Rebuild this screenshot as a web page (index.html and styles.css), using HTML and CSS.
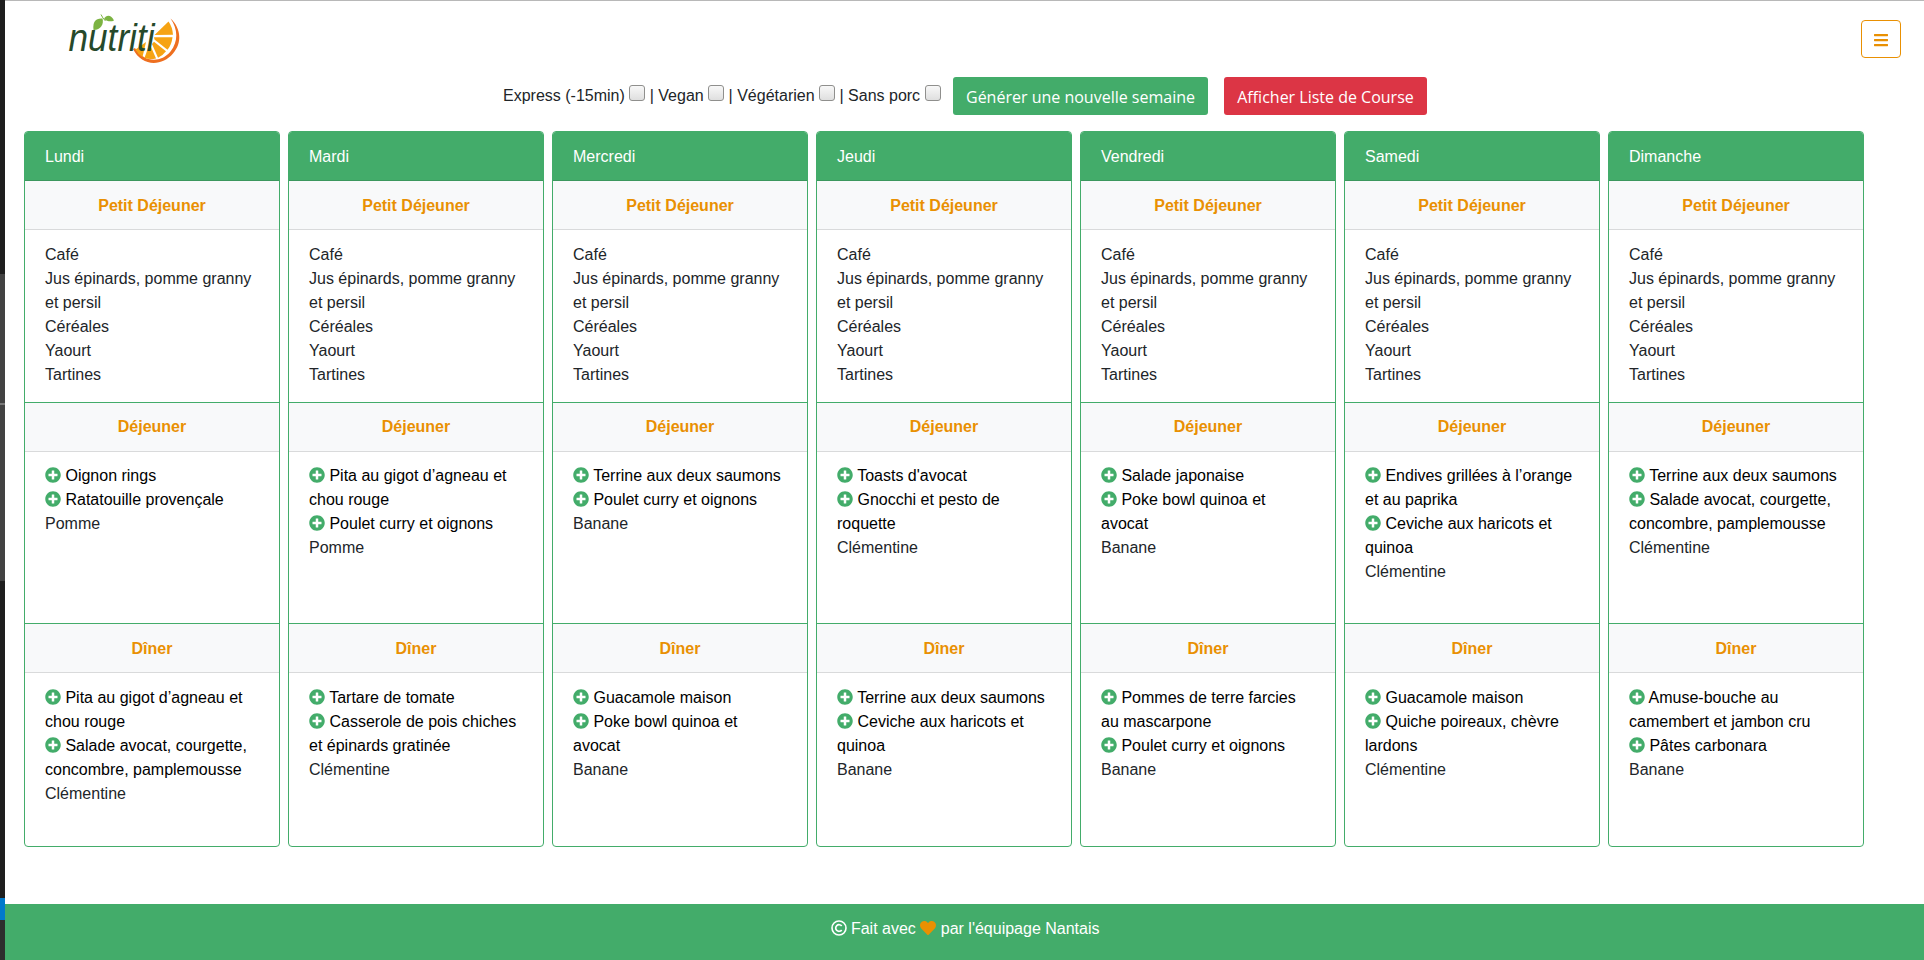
FILE: index.html
```html
<!DOCTYPE html>
<html lang="fr">
<head>
<meta charset="utf-8">
<title>Nutriti</title>
<link rel="stylesheet" href="styles.css">
</head>
<body>
<svg class="sprite" width="0" height="0" aria-hidden="true">
  <symbol id="plus" viewBox="0 0 512 512"><path d="M256 8C119 8 8 119 8 256s111 248 248 248 248-111 248-248S393 8 256 8zm144 276c0 6.600-5.400 12-12 12h-92v92c0 6.600-5.400 12-12 12h-56c-6.600 0-12-5.400-12-12v-92h-92c-6.600 0-12-5.400-12-12v-56c0-6.600 5.400-12 12-12h92v-92c0-6.600 5.400-12 12-12h56c6.600 0 12 5.400 12 12v92h92c6.600 0 12 5.400 12 12v56z"/></symbol>
</svg>
<aside class="dock"><i class="dock-top"></i><i class="dock-thumb"><b></b></i><i class="dock-low"></i><i class="dock-blue"></i><i class="dock-end"></i></aside>
<div class="page">
  <header class="topbar">
    <svg class="logo" width="130" height="65" viewBox="0 0 130 65" role="img" aria-label="nutriti">
      <path fill="#ee6f20" d="M110.500 13.500C121 23 122.500 38 113 48.500C102 61.500 82 62 73 44L75 43C84 58 101 58 110.500 46.500C118.500 36.500 118 24 110.500 13.500Z"/>
      <g fill="#f6a313">
        <path d="M108.500 16.500Q112.500 22 113 29.800L94.500 30Z"/>
        <path d="M94 32.200H112.500Q111.500 40 107.500 44.800L94.500 34.500Z"/>
        <path d="M94 36.800L106 46.300Q103 50.500 98 52.700L92 39Z"/>
        <path d="M89.500 38.500L96 53.400Q90 55 84.500 53Z"/>
        <path d="M86 37L82.500 52Q78 49.500 75.500 44.500Z"/>
      </g>
      <g fill="#7cb342">
        <path d="M33.500 25C32.500 16 36 13 42.500 13.500C44 19 41 25 33.500 25Z"/>
        <path d="M44 14C46.500 9 51.500 10 54 15.500C51 17 47 16.500 44 14Z"/>
      </g>
      <path d="M41 9.500Q42.500 13 45.500 16" fill="none" stroke="#7cb342" stroke-width="1"/>
      <text class="logo-text" x="0" y="0" transform="translate(8.500 45.500) scale(1 1.650)" textLength="86" lengthAdjust="spacingAndGlyphs">nutriti</text>
    </svg>
    <button class="menu" aria-label="Menu"><svg width="14" height="16" viewBox="0 0 448 512"><path fill="currentColor" d="M16 132h416c8.800 0 16-7.200 16-16V76c0-8.800-7.200-16-16-16H16C7.200 60 0 67.200 0 76v40c0 8.800 7.200 16 16 16zm0 160h416c8.800 0 16-7.200 16-16v-40c0-8.800-7.200-16-16-16H16c-8.800 0-16 7.200-16 16v40c0 8.800 7.200 16 16 16zm0 160h416c8.800 0 16-7.200 16-16v-40c0-8.800-7.200-16-16-16H16c-8.800 0-16 7.200-16 16v40c0 8.800 7.200 16 16 16z"/></svg></button>
  </header>
  <form class="filters">
    <div class="checks">Express (-15min) <input type="checkbox"> | Vegan <input type="checkbox"> | Végétarien <input type="checkbox"> | Sans porc <input type="checkbox"></div>
    <button type="button" class="btn green">Générer une nouvelle semaine</button>
    <button type="button" class="btn red">Afficher Liste de Course</button>
  </form>
  <main class="week">
    <section class="day">
      <h2>Lundi</h2>
      <h3>Petit Déjeuner</h3>
      <ul class="morning"><li>Café</li><li>Jus épinards, pomme granny et persil</li><li>Céréales</li><li>Yaourt</li><li>Tartines</li></ul>
      <h3 class="mid">Déjeuner</h3>
      <ul class="noon"><li><a><svg><use href="#plus"/></svg> Oignon rings</a></li><li><a><svg><use href="#plus"/></svg> Ratatouille provençale</a></li><li>Pomme</li></ul>
      <h3>Dîner</h3>
      <ul class="evening"><li><a><svg><use href="#plus"/></svg> Pita au gigot d’agneau et chou rouge</a></li><li><a><svg><use href="#plus"/></svg> Salade avocat, courgette, concombre, pamplemousse</a></li><li>Clémentine</li></ul>
    </section>
    <section class="day">
      <h2>Mardi</h2>
      <h3>Petit Déjeuner</h3>
      <ul class="morning"><li>Café</li><li>Jus épinards, pomme granny et persil</li><li>Céréales</li><li>Yaourt</li><li>Tartines</li></ul>
      <h3 class="mid">Déjeuner</h3>
      <ul class="noon"><li><a><svg><use href="#plus"/></svg> Pita au gigot d’agneau et chou rouge</a></li><li><a><svg><use href="#plus"/></svg> Poulet curry et oignons</a></li><li>Pomme</li></ul>
      <h3>Dîner</h3>
      <ul class="evening"><li><a><svg><use href="#plus"/></svg> Tartare de tomate</a></li><li><a><svg><use href="#plus"/></svg> Casserole de pois chiches et épinards gratinée</a></li><li>Clémentine</li></ul>
    </section>
    <section class="day">
      <h2>Mercredi</h2>
      <h3>Petit Déjeuner</h3>
      <ul class="morning"><li>Café</li><li>Jus épinards, pomme granny et persil</li><li>Céréales</li><li>Yaourt</li><li>Tartines</li></ul>
      <h3 class="mid">Déjeuner</h3>
      <ul class="noon"><li><a><svg><use href="#plus"/></svg> Terrine aux deux saumons</a></li><li><a><svg><use href="#plus"/></svg> Poulet curry et oignons</a></li><li>Banane</li></ul>
      <h3>Dîner</h3>
      <ul class="evening"><li><a><svg><use href="#plus"/></svg> Guacamole maison</a></li><li><a><svg><use href="#plus"/></svg> Poke bowl quinoa et avocat</a></li><li>Banane</li></ul>
    </section>
    <section class="day">
      <h2>Jeudi</h2>
      <h3>Petit Déjeuner</h3>
      <ul class="morning"><li>Café</li><li>Jus épinards, pomme granny et persil</li><li>Céréales</li><li>Yaourt</li><li>Tartines</li></ul>
      <h3 class="mid">Déjeuner</h3>
      <ul class="noon"><li><a><svg><use href="#plus"/></svg> Toasts d'avocat</a></li><li><a><svg><use href="#plus"/></svg> Gnocchi et pesto de roquette</a></li><li>Clémentine</li></ul>
      <h3>Dîner</h3>
      <ul class="evening"><li><a><svg><use href="#plus"/></svg> Terrine aux deux saumons</a></li><li><a><svg><use href="#plus"/></svg> Ceviche aux haricots et quinoa</a></li><li>Banane</li></ul>
    </section>
    <section class="day">
      <h2>Vendredi</h2>
      <h3>Petit Déjeuner</h3>
      <ul class="morning"><li>Café</li><li>Jus épinards, pomme granny et persil</li><li>Céréales</li><li>Yaourt</li><li>Tartines</li></ul>
      <h3 class="mid">Déjeuner</h3>
      <ul class="noon"><li><a><svg><use href="#plus"/></svg> Salade japonaise</a></li><li><a><svg><use href="#plus"/></svg> Poke bowl quinoa et avocat</a></li><li>Banane</li></ul>
      <h3>Dîner</h3>
      <ul class="evening"><li><a><svg><use href="#plus"/></svg> Pommes de terre farcies au mascarpone</a></li><li><a><svg><use href="#plus"/></svg> Poulet curry et oignons</a></li><li>Banane</li></ul>
    </section>
    <section class="day">
      <h2>Samedi</h2>
      <h3>Petit Déjeuner</h3>
      <ul class="morning"><li>Café</li><li>Jus épinards, pomme granny et persil</li><li>Céréales</li><li>Yaourt</li><li>Tartines</li></ul>
      <h3 class="mid">Déjeuner</h3>
      <ul class="noon"><li><a><svg><use href="#plus"/></svg> Endives grillées à l’orange et au paprika</a></li><li><a><svg><use href="#plus"/></svg> Ceviche aux haricots et quinoa</a></li><li>Clémentine</li></ul>
      <h3>Dîner</h3>
      <ul class="evening"><li><a><svg><use href="#plus"/></svg> Guacamole maison</a></li><li><a><svg><use href="#plus"/></svg> Quiche poireaux, chèvre lardons</a></li><li>Clémentine</li></ul>
    </section>
    <section class="day">
      <h2>Dimanche</h2>
      <h3>Petit Déjeuner</h3>
      <ul class="morning"><li>Café</li><li>Jus épinards, pomme granny et persil</li><li>Céréales</li><li>Yaourt</li><li>Tartines</li></ul>
      <h3 class="mid">Déjeuner</h3>
      <ul class="noon"><li><a><svg><use href="#plus"/></svg> Terrine aux deux saumons</a></li><li><a><svg><use href="#plus"/></svg> Salade avocat, courgette, concombre, pamplemousse</a></li><li>Clémentine</li></ul>
      <h3>Dîner</h3>
      <ul class="evening"><li><a><svg><use href="#plus"/></svg> Amuse-bouche au camembert et jambon cru</a></li><li><a><svg><use href="#plus"/></svg> Pâtes carbonara</a></li><li>Banane</li></ul>
    </section>
  </main>
  <footer class="footer"><svg viewBox="0 0 16 16"><circle cx="8" cy="8" r="7" fill="none" stroke="#fff" stroke-width="1.600"/><path d="M10.700 9.900A3.300 3.300 0 1 1 10.700 6.100" fill="none" stroke="#fff" stroke-width="1.700"/></svg> Fait avec <svg viewBox="0 0 512 512"><path fill="#e99002" d="M462.300 62.600C407.500 15.900 326 24.300 275.700 76.200L256 96.500l-19.700-20.300C186.100 24.300 104.500 15.900 49.700 62.600c-62.800 53.600-66.100 149.800-9.900 207.900l193.500 199.800c12.500 12.900 32.800 12.900 45.300 0l193.500-199.800c56.300-58.100 53-154.300-9.800-207.900z"/></svg> par l'équipage Nantais</footer>
</div>
</body>
</html>
```
FILE: styles.css
```css
* { box-sizing: border-box; }

body {
  margin: 0;
  display: flex;
  height: 960px;
  overflow: hidden;
  background: #fff;
  color: #212529;
  font: 16px/24px "Liberation Sans", Arial, sans-serif;
}

.sprite { position: absolute; }

/* Dark strip along the left edge */
.dock { width: 5px; display: flex; flex-direction: column; flex: none; background: #1e1e1e; }
.dock i { display: block; }
.dock-top { height: 274px; }
.dock-thumb { height: 307px; padding-top: 129px; background: #424242; }
.dock-thumb b { display: block; height: 2px; background: #797979; }
.dock-low { height: 317px; }
.dock-blue { height: 22px; background: #007acc; }
.dock-end { flex: 1; background: #2d2d2d; }

.page { flex: 1; display: flex; flex-direction: column; border-top: 1px solid #b8b8b8; }

.topbar { height: 76px; display: flex; justify-content: space-between; align-items: flex-start; padding: 4px 23px 0 55px; }
.logo { display: block; }
.logo-text {
  font: italic 24px "Liberation Sans", Arial, sans-serif;
  fill: #26492b;
}
.menu {
  width: 40px;
  height: 38px;
  margin-top: 15px;
  padding: 1px 0 0;
  display: flex;
  align-items: center;
  justify-content: center;
  border: 1px solid #e99002;
  border-radius: 4px;
  background: #fff;
  color: #e99002;
}

.filters { display: flex; height: 38px; padding-left: 498px; }
.checks { width: 450px; padding-top: 7px; white-space: nowrap; }
.checks input {
  appearance: none;
  width: 16px;
  height: 16px;
  margin: 0;
  vertical-align: baseline;
  border: 1px solid #8f8f8d;
  border-radius: 3px;
  background: linear-gradient(#f8f8f8, #dfdfdf);
}
.btn {
  height: 38px;
  padding: 1px 0 0;
  border: 0;
  border-radius: 3px;
  color: #fff;
  font: 16px/24px "Open Sans", sans-serif;
  white-space: nowrap;
}
.green { width: 255px; background: #43ac6a; }
.red { width: 203px; margin-left: 16px; background: #dc3545; }

.week { display: flex; gap: 8px; margin: 16px 0 0 19px; }
.day { width: 256px; height: 716px; border: 1px solid #43ac6a; border-radius: 4px; overflow: hidden; }
.day h2, .day h3 { margin: 0; height: 49px; padding: 13px 20px 11px; font-size: 16px; line-height: 24px; }
.day h2 { background: #43ac6a; color: #fff; font-weight: 400; border-bottom: 1px solid #3b975d; }
.day h3 { background: #f8f9fa; color: #e99002; text-align: center; border-bottom: 1px solid #d9dadb; }
.day .mid { padding-top: 12px; }
.day ul { margin: 0; padding: 13px 20px 0; list-style: none; }
.morning { height: 173px; border-bottom: 1px solid #43ac6a; }
.day .noon { height: 172px; padding-top: 12px; border-bottom: 1px solid #43ac6a; }
.evening { height: 173px; }
.day a { color: #000; }
.day a svg { width: 16px; height: 16px; vertical-align: -2px; fill: #43ac6a; }

.footer { height: 56px; margin-top: auto; padding: 13px 0 0 1px; text-align: center; background: #43ac6a; color: #fff; }
.footer svg { width: 16px; height: 16px; vertical-align: -2px; }
```
